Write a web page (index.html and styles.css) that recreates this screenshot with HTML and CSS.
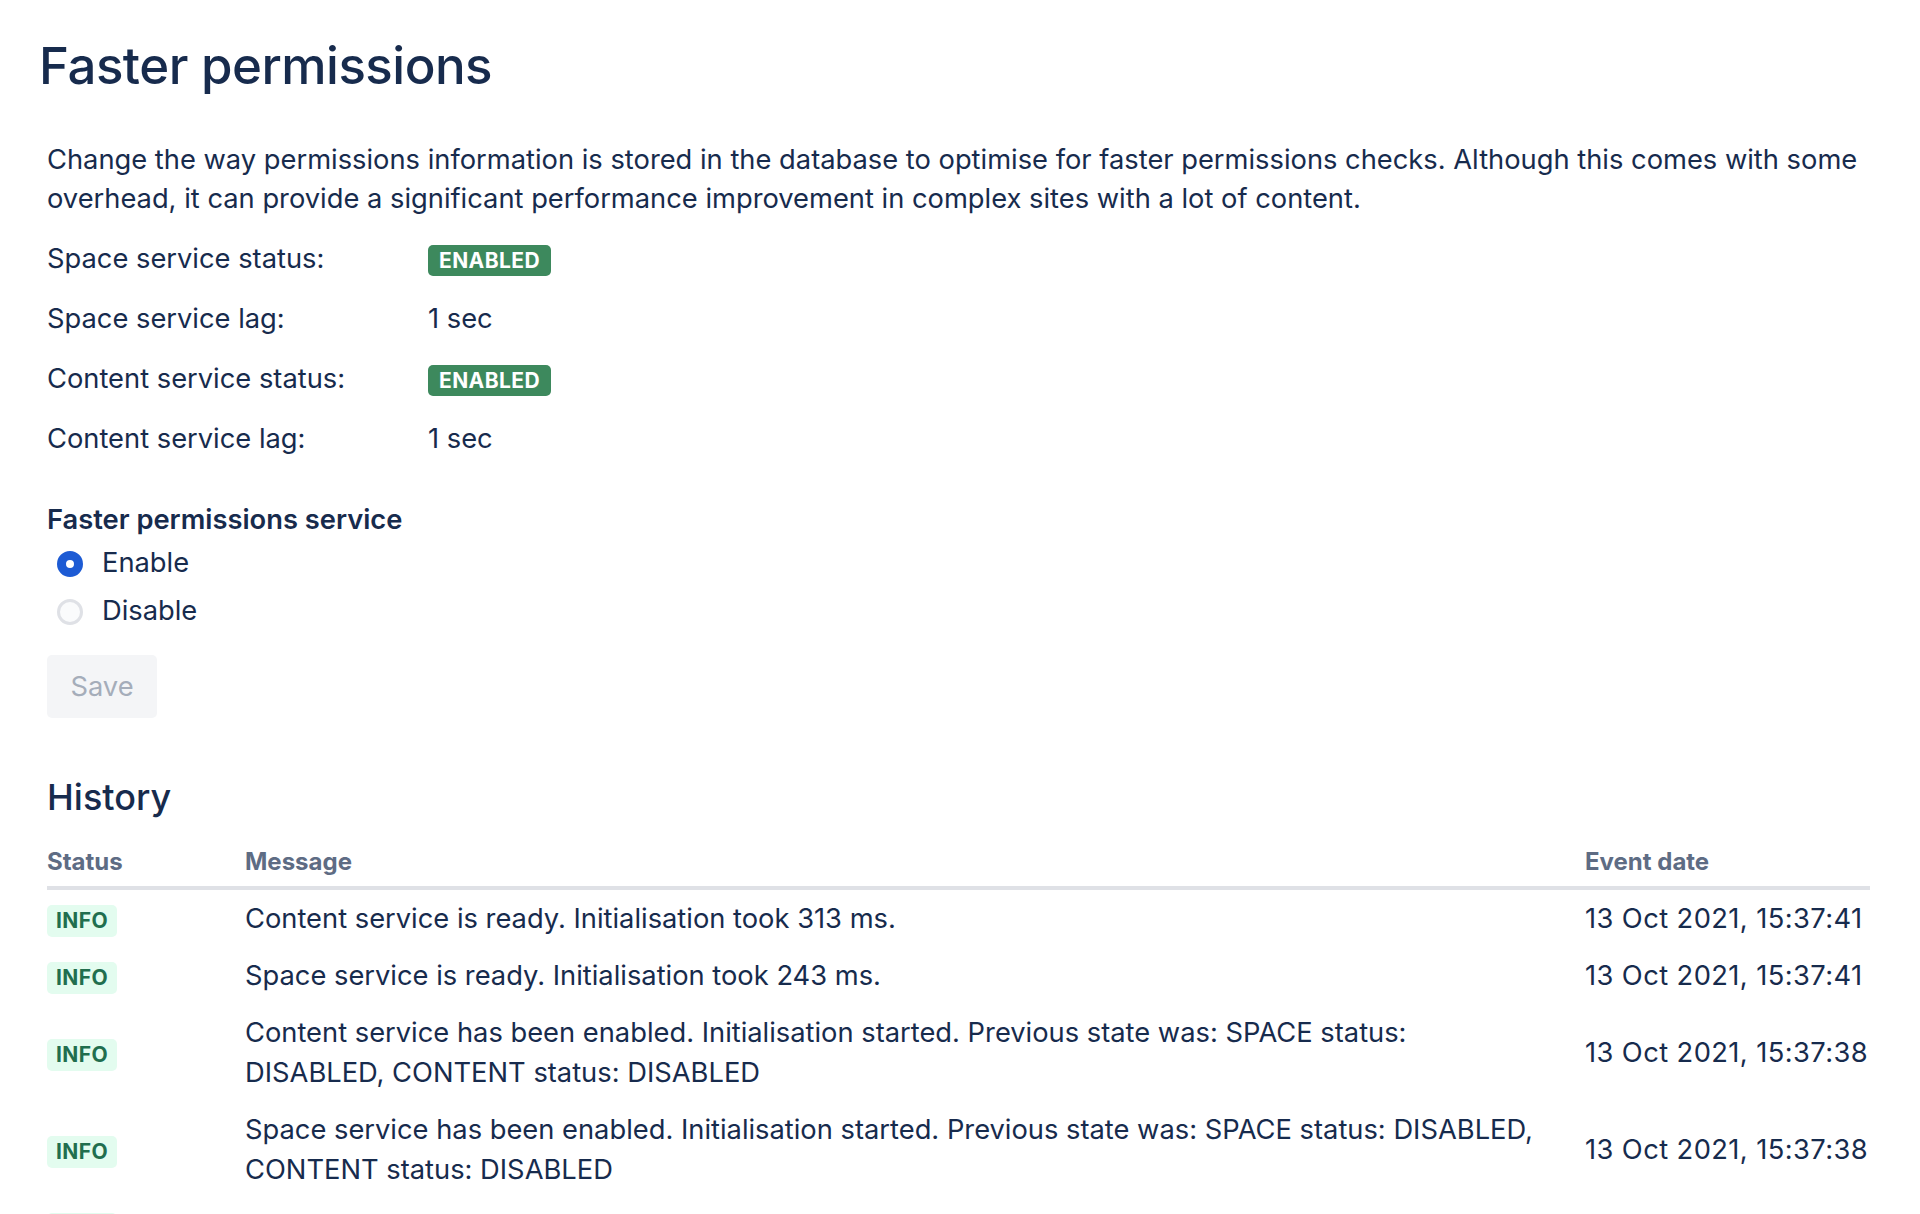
FILE: index.html
```html
<!DOCTYPE html>
<html lang="en">
<head>
<meta charset="utf-8">
<title>Faster permissions</title>
<link rel="stylesheet" href="styles.css">
</head>
<body>
<main class="page">
  <h1 class="title">Faster permissions</h1>
  <p class="intro">Change the way permissions information is stored in the database to optimise for faster permissions checks. Although this comes with some overhead, it can provide a significant performance improvement in complex sites with a lot of content.</p>

  <dl class="status-list">
    <div class="status-row"><dt>Space service status:</dt><dd><span class="badge">ENABLED</span></dd></div>
    <div class="status-row"><dt>Space service lag:</dt><dd>1 sec</dd></div>
    <div class="status-row"><dt>Content service status:</dt><dd><span class="badge">ENABLED</span></dd></div>
    <div class="status-row"><dt>Content service lag:</dt><dd>1 sec</dd></div>
  </dl>

  <fieldset class="service">
    <legend class="service-title">Faster permissions service</legend>
    <label class="radio-row"><input class="radio" type="radio" name="service" checked><span>Enable</span></label>
    <label class="radio-row"><input class="radio" type="radio" name="service"><span>Disable</span></label>
  </fieldset>

  <button class="save" type="button" disabled>Save</button>

  <h2 class="history-title">History</h2>
  <table class="history">
    <colgroup>
      <col class="col-status">
      <col class="col-message">
      <col class="col-date">
    </colgroup>
    <thead>
      <tr><th>Status</th><th>Message</th><th>Event date</th></tr>
    </thead>
    <tbody>
      <tr><td><span class="lozenge">INFO</span></td><td>Content service is ready. Initialisation took 313 ms.</td><td class="date">13 Oct 2021, 15:37:41</td></tr>
      <tr><td><span class="lozenge">INFO</span></td><td>Space service is ready. Initialisation took 243 ms.</td><td class="date">13 Oct 2021, 15:37:41</td></tr>
      <tr><td><span class="lozenge">INFO</span></td><td>Content service has been enabled. Initialisation started. Previous state was: SPACE status: DISABLED, CONTENT status: DISABLED</td><td class="date">13 Oct 2021, 15:37:38</td></tr>
      <tr><td><span class="lozenge">INFO</span></td><td>Space service has been enabled. Initialisation started. Previous state was: SPACE status: DISABLED, CONTENT status: DISABLED</td><td class="date">13 Oct 2021, 15:37:38</td></tr>
      <tr><td><span class="lozenge">INFO</span></td><td>Space service is initialising.</td><td class="date">13 Oct 2021, 15:37:38</td></tr>
    </tbody>
  </table>
</main>
</body>
</html>
```

FILE: styles.css
```css
* { box-sizing: border-box; }

html, body {
  margin: 0;
  padding: 0;
  background: #ffffff;
}

body {
  font-family: "Inter", "Noto Sans", "Liberation Sans", sans-serif;
  font-size: 27.3px;
  line-height: 40px;
  color: #172b4d;
  overflow: hidden;
}

.page {
  height: 1214px;
  overflow: hidden;
  padding: 32px 50px 0 47px;
}

.title {
  margin: 0 0 40px -8px;
  font-size: 51px;
  line-height: 68px;
  font-weight: 500;
  letter-spacing: -0.01em;
  color: #172b4d;
}

.intro {
  margin: 0;
  line-height: 39px;
}

.status-list {
  margin: 21px 0 0;
  display: grid;
  row-gap: 20px;
}

.status-row {
  display: grid;
  grid-template-columns: 381px 1fr;
  align-items: center;
  height: 40px;
}

.status-row dt,
.status-row dd {
  margin: 0;
}

.badge {
  display: inline-block;
  height: 31px;
  padding: 0 11px;
  border-radius: 5px;
  background: #3d895d;
  color: #ffffff;
  font-size: 21px;
  line-height: 31px;
  font-weight: 700;
  letter-spacing: 0.02em;
  vertical-align: middle;
}

.service {
  margin: 41px 0 0;
  padding: 0;
  border: 0;
  min-width: 0;
}

.service-title {
  padding: 0;
  font-weight: 600;
  line-height: 40px;
}

.radio-row {
  display: flex;
  align-items: center;
  gap: 19px;
  height: 40px;
  margin-top: 3px;
  padding-left: 10px;
}

.radio-row + .radio-row {
  margin-top: 8px;
}

.radio {
  appearance: none;
  -webkit-appearance: none;
  margin: 2px 0 0;
  width: 26px;
  height: 26px;
  border-radius: 50%;
  border: 3px solid #dfe1e6;
  background: #fafbfc;
  flex: none;
}

.radio:checked {
  border: 9px solid #1d5bd4;
  background: #ffffff;
}

.save {
  display: block;
  margin-top: 24px;
  width: 110px;
  height: 63px;
  border: 0;
  border-radius: 5px;
  background: #f4f5f7;
  color: #a5adba;
  font-family: inherit;
  font-size: 27.3px;
}

.history-title {
  margin: 55px 0 0;
  font-size: 36px;
  line-height: 48px;
  font-weight: 500;
  color: #172b4d;
}

.history {
  margin-top: 26px;
  width: 1823px;
  border-collapse: collapse;
  table-layout: fixed;
}

.col-status { width: 198px; }
.col-message { width: 1340px; }
.col-date { width: 285px; }

.history th {
  text-align: left;
  padding: 0 0 9px;
  font-size: 24px;
  line-height: 30px;
  font-weight: 700;
  color: #5e6c84;
  border-bottom: 4px solid #dfe1e6;
}

.history td {
  padding: 9px 46px 8px 0;
  vertical-align: middle;
}

.history td.date {
  padding-right: 0;
  white-space: nowrap;
  letter-spacing: 0.015em;
}

.lozenge {
  display: inline-block;
  height: 32px;
  padding: 0 9px;
  border-radius: 5px;
  background: #e3fcef;
  color: #216e4e;
  font-size: 21px;
  line-height: 32px;
  font-weight: 700;
  letter-spacing: 0.02em;
  vertical-align: middle;
}
```
